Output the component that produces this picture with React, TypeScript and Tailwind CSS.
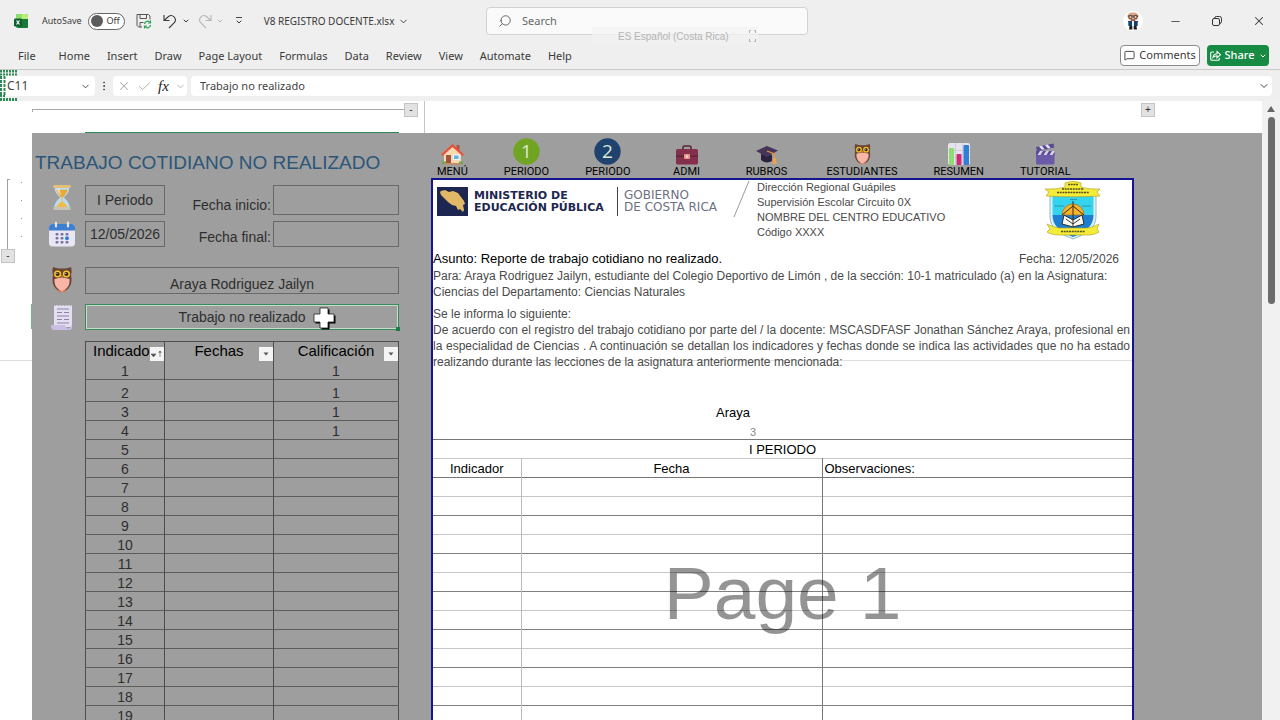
import { useState } from 'react'
import type { ReactNode } from 'react'
import {
  Check,
  ChevronDown,
  EllipsisVertical,
  MessageSquare,
  Minus,
  Search,
  X,
} from 'lucide-react'

const TABS = [
  'File', 'Home', 'Insert', 'Draw', 'Page Layout', 'Formulas',
  'Data', 'Review', 'View', 'Automate', 'Help',
]

const CALIFICACIONES: Record<number, string> = { 1: '1', 2: '1', 3: '1', 4: '1' }

const INDICADORES = Array.from({ length: 19 }, (_, i) => i + 1)

function ExcelLogo() {
  return (
    <svg width="14" height="14" viewBox="0 0 14 14">
      <rect x="2" y="0" width="12" height="14" rx="1.5" fill="#2fa84f" />
      <path d="M2 1.5A1.5 1.5 0 0 1 3.500 0H8v5H2z" fill="#8fe06a" />
      <path d="M8 0h4.500A1.500 1.500 0 0 1 14 1.500V5H8z" fill="#b9ee7c" />
      <path d="M7 5h7v7.500a1.500 1.500 0 0 1-1.500 1.500H4V9z" fill="#187a3a" />
      <rect x="0" y="4.500" width="8" height="8" rx="1.200" fill="#0f5f2c" />
      <path d="M2.500 6.500l3 4M5.500 6.500l-3 4" stroke="#fff" strokeWidth="1.200" />
    </svg>
  )
}

function SaveSync() {
  return (
    <svg width="16" height="16" viewBox="0 0 16 16" fill="none" stroke="#555" strokeWidth="1">
      <path d="M6 14H2.500L1 12.500V1.500h11.500L14 3v3.500" />
      <path d="M4 1.500v4h6.500v-4M4 14V9.500h3.500" />
      <path d="M8.500 11a3 3 0 0 1 5.500-1.500M14.500 12a3 3 0 0 1-5.500 1.500" stroke="#2ba457" strokeWidth="1.300" />
      <path d="M14.500 7.500v2.500H12M8.500 15.500V13H11" stroke="#2ba457" strokeWidth="1.200" />
    </svg>
  )
}

function UndoArrow({ className }: { className?: string }) {
  return (
    <svg width="14" height="15" viewBox="0 0 14 15" fill="none" stroke="currentColor" strokeWidth="1.1" className={className}>
      <path d="M1 1v5.500h5.500" />
      <path d="M1 6.500L5.500 2.500a4.300 4.300 0 0 1 6 6L6 14" />
    </svg>
  )
}

function ShareIcon() {
  return (
    <svg width="11" height="11" viewBox="0 0 11 11" fill="none" stroke="currentColor" strokeWidth="1.1">
      <path d="M4 2H2A1.300 1.300 0 0 0 .7 3.300v5.500A1.300 1.300 0 0 0 2 10.200h6a1.300 1.300 0 0 0 1.300-1.300V8" />
      <path d="M3 7.500C3.300 4.800 5 3.700 7 3.700V1.500l3.500 3.200L7 7.800V5.800C5.300 5.800 4.200 6.200 3 7.500z" />
    </svg>
  )
}

function Avatar() {
  return (
    <svg width="20" height="20" viewBox="0 0 20 20">
      <circle cx="10" cy="10" r="10" fill="#fff" />
      <rect x="5" y="1.500" width="10" height="8" rx="3.500" fill="#d9a78a" />
      <path d="M4.500 5h11" stroke="#4a3328" strokeWidth=".9" />
      <circle cx="7.500" cy="6" r="1.600" fill="#e8c4ae" stroke="#3a2a22" strokeWidth=".8" />
      <circle cx="12.500" cy="6" r="1.600" fill="#e8c4ae" stroke="#3a2a22" strokeWidth=".8" />
      <path d="M7.800 8.300h4.400v1.700H7.800z" fill="#9a5b43" />
      <path d="M5 10h10v5H5z" fill="#1d3c66" />
      <path d="M9 10h2v5H9z" fill="#e8f1fa" />
      <path d="M5.500 11v4M14.500 11v4" stroke="#3d86c9" strokeWidth="1" />
      <path d="M6.500 15h2.800v3.500H6zM10.700 15h2.800l.5 3.500h-3.300z" fill="#1b1b1f" />
    </svg>
  )
}

function Hourglass() {
  return (
    <svg width="20" height="25" viewBox="0 0 20 26">
      <path d="M2.500 3h15c0 5-3 7-5.500 10 2.500 3 6 5 6 11H2c0-6 3.500-8 6-11-2.500-3-5.500-5-5.500-10z" fill="#b9dcf2" />
      <path d="M4 5h12c-1 4-3.500 6-5 8H9C7.500 11 5 9 4 5z" fill="#eaa934" />
      <path d="M9.500 12h1v5l5 4.500v1.500h-11v-1.500l5-4.500z" fill="#f0bb4b" />
      <rect x="1" y="0" width="18" height="3" rx="1" fill="#e5c07a" />
      <rect x="1" y="23" width="18" height="3" rx="1" fill="#c9c3b4" />
      <path d="M4.500 4h3c.5 3 1 5 2 7-3-2-4.500-4-5-7z" fill="#fff" opacity=".5" />
    </svg>
  )
}

function Calendar() {
  return (
    <svg width="26" height="26" viewBox="0 0 26 26">
      <rect x="0" y="3" width="26" height="22.500" rx="3.500" fill="#e9e6f4" />
      <path d="M0 9.500V6.500A3.500 3.500 0 0 1 3.500 3h19A3.500 3.500 0 0 1 26 6.500v3z" fill="#3f7fd0" />
      <path d="M7 1.500v4M19 1.500v4" stroke="#dfe4f2" strokeWidth="2.200" strokeLinecap="round" />
      <g fill="#77719a">
        <rect x="6.500" y="12" width="3" height="2.500" rx="1" />
        <rect x="11.500" y="12" width="3" height="2.500" rx="1" />
        <rect x="16.500" y="12" width="3" height="2.500" rx="1" />
        <rect x="6.500" y="16" width="3" height="2.500" rx="1" />
        <rect x="11.500" y="16" width="3" height="2.500" rx="1" />
        <rect x="6.500" y="20" width="3" height="2.500" rx="1" />
        <rect x="11.500" y="20" width="3" height="2.500" rx="1" />
        <rect x="16.500" y="20" width="3" height="2.500" rx="1" />
      </g>
      <circle cx="18" cy="17.200" r="2" fill="#2f7fe0" />
    </svg>
  )
}

function Owl({ width, height }: { width: number; height: number }) {
  return (
    <svg width={width} height={height} viewBox="0 0 20 26">
      <path d="M1 0c3 1 5 1.500 9 1.500S16 1 19 0c.8 3 .8 5 0 8 1.500 7 0 12-5 15.500H6C1 20-.5 15 1 8 .2 5 .2 3 1 0z" fill="#6b4433" />
      <path d="M2.500 12c3-.5 5.500-1.500 7.500-1.500s4.500 1 7.500 1.500c.5 6-2 10-7.500 12.500C4.500 22 2 18 2.500 12z" fill="#f7b6a8" />
      <path d="M6 23l1.500 2.500L10 24l2.500 1.500L14 23l-4 1z" fill="#ef6d3a" />
      <circle cx="5.600" cy="7" r="3.600" fill="#f4c52e" />
      <circle cx="14.400" cy="7" r="3.600" fill="#f4c52e" />
      <circle cx="5.600" cy="7" r="2" fill="#3a2418" />
      <circle cx="14.400" cy="7" r="2" fill="#3a2418" />
      <circle cx="5" cy="6.500" r=".6" fill="#fff" />
      <circle cx="13.800" cy="6.500" r=".6" fill="#fff" />
      <path d="M9 8.500h2l-1 2.500z" fill="#ef9a2a" />
    </svg>
  )
}

function Scroll() {
  return (
    <svg width="22" height="26" viewBox="0 0 22 26">
      <path d="M3 1l1.500 1L6 1l1.500 1L9 1l1.500 1L12 1l1.500 1L15 1l1.500 1L18 1l1.500 1L21 1v22H3z" fill="#e4dff0" />
      <path d="M6 5h12M6 8.500h5M13 8.500h5M6 12h12M6 15.500h5M13 15.500h5M6 19h12" stroke="#8b82a8" strokeWidth="1.200" />
      <path d="M0 21h14.500c-.2 2 .6 3 2 3.500 2 .4 3.500-1 3.500-3h1v2c0 1.800-1.300 2.500-3 2.500H3c-2 0-3-2-3-5z" fill="#cabfe2" />
    </svg>
  )
}

function House() {
  return (
    <svg width="23" height="22" viewBox="0 0 23 22">
      <path d="M15.500 2h3v6h-3z" fill="#b5543c" />
      <path d="M3 10.500L11.500 3 20 10.500V20H3z" fill="#f6d9b0" />
      <path d="M0 11.500L11.500 1 23 11.500l-1.500 1.500-10-9-10 9z" fill="#e8503c" />
      <rect x="5" y="12" width="5" height="8" fill="#a0563c" />
      <rect x="12.500" y="12" width="5.500" height="4.500" fill="#5fb4e8" stroke="#fff" strokeWidth=".8" />
      <path d="M1 18.500h4V21H1zM18 18.500h4V21h-4z" fill="#5fae4a" />
      <path d="M3 20h17v1.500H3z" fill="#c98a5a" />
    </svg>
  )
}

function NumberBadge({ n, fill }: { n: number; fill: string }) {
  return (
    <svg width="27" height="27" viewBox="0 0 27 27">
      <circle cx="13.500" cy="13.500" r="13.200" fill={fill} />
      <text x="13.500" y="20" textAnchor="middle" fontFamily="'Open Sans', sans-serif" fontSize="19" fill="#dfe8d4">
        {n}
      </text>
    </svg>
  )
}

function Briefcase() {
  return (
    <svg width="22" height="20" viewBox="0 0 22 20">
      <path d="M7 5V2.500A1.500 1.500 0 0 1 8.500 1h5A1.500 1.500 0 0 1 15 2.500V5" fill="none" stroke="#5d2438" strokeWidth="1.600" />
      <rect x="0" y="4" width="22" height="15.500" rx="1.500" fill="#84304d" />
      <path d="M0 10.500h22v1.500H0z" fill="#5d2438" />
      <rect x="8" y="9" width="6" height="5" rx="1" fill="#e8938c" />
      <rect x="10" y="10.500" width="2" height="2" fill="#fbe4d0" />
    </svg>
  )
}

function GradCap() {
  return (
    <svg width="22" height="20" viewBox="0 0 22 20">
      <path d="M5 9v6c3 3 8 3 11 1v-6z" fill="#2c2340" />
      <path d="M0 6l11-5 11 4.500L11 12z" fill="#453659" />
      <path d="M11 6l7.500 3v5" fill="none" stroke="#e9943a" strokeWidth="1.300" />
      <path d="M17.300 13h2.600l.8 6h-4.200z" fill="#eea34a" />
    </svg>
  )
}

function BarChart() {
  return (
    <svg width="22" height="22" viewBox="0 0 22 22">
      <rect x="0" y="0" width="22" height="22" rx="2" fill="#e6e2ee" />
      <path d="M0 7.500h22M0 14.500h22M7.500 0v22M14.500 0v22" stroke="#cbc5da" strokeWidth=".8" />
      <rect x="1" y="5" width="5" height="17" rx=".8" fill="#8fdc72" />
      <rect x="8.500" y="11" width="5" height="11" rx=".8" fill="#cf2c73" />
      <rect x="15.500" y="2" width="5.500" height="20" rx=".8" fill="#2f7fd6" />
    </svg>
  )
}

function Clapper() {
  return (
    <svg width="21" height="22" viewBox="0 0 21 22">
      <path d="M1 4L18.500.5l.8 4L2 8.500z" fill="#5a4c92" />
      <path d="M4 3.400l3 3.400 2.700-.6-3-3.400zM10 2.200l3 3.400 2.700-.6-3-3.400z" fill="#e8e3f4" />
      <rect x="1" y="8" width="18.500" height="13.500" rx="1.500" fill="#6a5aa8" />
      <path d="M1 8h18.500v4H1z" fill="#5a4c92" />
      <path d="M5 8h3l-2.500 4h-3zM11 8h3l-2.500 4h-3zM17 8h2.500v1l-2 3h-3z" fill="#d8d2ec" />
    </svg>
  )
}

function CrestLogo() {
  return (
    <svg width="58" height="60" viewBox="0 0 58 60">
      <path d="M6 12c8 1 15-1 23-5 8 4 15 6 23 5v24c0 11-10 17-23 22C16 53 6 47 6 36z" fill="#d9f3fb" stroke="#7fa8b8" strokeWidth=".8" />
      <path d="M8.500 15h41v19h-41z" fill="#35d4ee" />
      <path d="M8.500 34h41c0 11-8 17-20.500 22C16.500 51 8.500 45 8.500 34z" fill="#1d7fd4" />
      <path d="M18 34a11 11 0 0 1 22 0z" fill="#f5b52a" stroke="#a5671a" strokeWidth=".7" />
      <path d="M29 20v22M18 34l11-9 11 9" stroke="#3c2a18" strokeWidth="1" fill="none" />
      <path d="M20 34l9 5 9-5 2 9-11 3-11-3z" fill="#f8f8f4" stroke="#2a2a2a" strokeWidth="1" />
      <path d="M22 38l7 5 7-5M29 39v7" stroke="#222" strokeWidth=".9" fill="none" />
      <path d="M21 2c5-2 11-2 16 0v4c6 2 12 2 19 2l-3 3 3 4c-18 1-36 1-54 0l3-4-4-3c8 0 14 0 20-2z" fill="#f5ec3a" stroke="#a89a20" strokeWidth=".6" />
      <path d="M24 3.500h10M18 8h22M13 11.500h32" stroke="#56501a" strokeWidth="1.300" strokeDasharray="2 .7" />
      <path d="M26 18.500h7M11 25h9M38 25h9" stroke="#2c7f92" strokeWidth="1" strokeDasharray="1.500 .6" />
      <path d="M3 43c7 3 10 4 14 4h24c5 0 8-1 14-4l-2 5 2 3c-5 3-9 3-14 3H17c-5 0-9 0-14-3l3-3z" fill="#f5ec3a" stroke="#a89a20" strokeWidth=".6" />
      <path d="M17 50.500h24" stroke="#56501a" strokeWidth="1.300" strokeDasharray="2 .7" />
    </svg>
  )
}

function MinistryLogo() {
  return (
    <svg width="314" height="38" viewBox="0 0 314 38" role="img" aria-label="Ministerio de Educación Pública">
      <rect x="0" y="7" width="31" height="29" fill="#1d2650" />
      <path
        d="M4 11l4-1 4 2 4-1 5 2 3 4 3 4 1 3-2 1 1 5-1 2-3-3-2 1-2-4-4-1-4-3-3-3-2-2-2-2-1-3z"
        fill="#e0b866"
      />
      <g fontFamily="'DejaVu Sans', sans-serif">
        <text x="37" y="19" fontSize="11" fontWeight="700" fill="#1d2650">MINISTERIO DE</text>
        <text x="37" y="31" fontSize="11" fontWeight="700" fill="#1d2650">EDUCACIÓN PÚBLICA</text>
        <text x="187" y="19" fontSize="12" fill="#6d7083">GOBIERNO</text>
        <text x="187" y="31" fontSize="12" fill="#6d7083">DE COSTA RICA</text>
      </g>
      <path d="M180.500 7v29" stroke="#3a4066" strokeWidth="1" />
      <path d="M312 1L297 37" stroke="#9a9a9a" strokeWidth="1" />
    </svg>
  )
}

// Marching-ants border of the copied range, seen past the left edge
function CopyMarquee() {
  return (
    <svg width="18" height="32" viewBox="0 0 18 32" className="pointer-events-none absolute top-0 left-0">
      <g stroke="#2c8a55" fill="none">
        <path d="M0 1h17M0 29.500h17" strokeWidth="3" strokeDasharray="2 1" />
        <path d="M0 4.500h17M0 26h6" strokeWidth="2" strokeDasharray="2 1" />
        <path d="M1 6v20" strokeWidth="2" strokeDasharray="3 1" />
        <path d="M4.500 6v20" strokeWidth="2" strokeDasharray="3 1" />
      </g>
    </svg>
  )
}

function TitleBar() {
  const [autoSave, setAutoSave] = useState(false)
  return (
    <header className="flex h-[42px] shrink-0 items-center">
      <div className="flex w-[486px] shrink-0 items-center pl-[14px]">
        <ExcelLogo />
        <span id="autosave" className="ml-[14px] text-[9px]">AutoSave</span>
        <button
          role="switch"
          aria-checked={autoSave}
          aria-labelledby="autosave"
          onClick={() => setAutoSave((v) => !v)}
          className="ml-[6px] flex h-[17px] w-[37px] items-center justify-between rounded-full border border-[#666] bg-white px-[2px] text-[9px]"
        >
          <span className="h-3 w-3 rounded-full bg-[#5c5c5c]" />
          <span className="pr-[2px]">{autoSave ? 'On' : 'Off'}</span>
        </button>
        <button aria-label="Save" className="ml-[11px]"><SaveSync /></button>
        <button aria-label="Undo" className="ml-[11px]"><UndoArrow /></button>
        <ChevronDown size={8} strokeWidth={3} className="ml-[5px]" />
        <button aria-label="Redo" className="ml-[8px] text-[#b5b5b5]"><UndoArrow className="-scale-x-100" /></button>
        <ChevronDown size={8} strokeWidth={3} className="ml-[4px] text-[#b5b5b5]" />
        <button aria-label="Customize toolbar" className="ml-[11px] flex flex-col items-center">
          <span className="h-px w-[6px] bg-[#444]" />
          <ChevronDown size={8} strokeWidth={3} />
        </button>
        <button className="ml-[21px] flex items-center gap-[4px] whitespace-nowrap text-[10px]">
          V8 REGISTRO DOCENTE.xlsx
          <ChevronDown size={11} strokeWidth={2} />
        </button>
      </div>
      <label className="flex h-7 w-[322px] shrink-0 items-center gap-[10px] rounded border border-[#d2d2d2] bg-[#fafafa] pl-[11px]">
        <Search size={14} strokeWidth={1.5} className="shrink-0 -scale-x-100 text-[#555]" />
        <input placeholder="Search" aria-label="Search" className="w-full bg-transparent text-[11px] outline-none placeholder:text-[#666]" />
      </label>
      <div className="ml-auto flex items-center">
        <Avatar />
        <div className="ml-[11px] flex items-center">
          <button aria-label="Minimize" className="flex w-[42px] justify-center"><Minus size={13} strokeWidth={1.5} /></button>
          <button aria-label="Restore" className="flex w-[42px] justify-center">
            <svg width="10" height="10" viewBox="0 0 10 10" fill="none" stroke="#333">
              <rect x=".5" y="2.500" width="7" height="7" rx="1.500" />
              <path d="M2.500 2.500A2 2 0 0 1 4.500.5H7.500a2 2 0 0 1 2 2v3a2 2 0 0 1-2 2" />
            </svg>
          </button>
          <button aria-label="Close" className="flex w-[42px] justify-center"><X size={14} strokeWidth={1.8} /></button>
        </div>
      </div>
    </header>
  )
}

function RibbonTabs() {
  return (
    <nav className="flex h-7 shrink-0 items-center border-b border-[#c9c9c9] pr-[11px] pl-[18px]">
      <div className="flex gap-[17px] pt-px text-[11px] whitespace-nowrap">
        {TABS.map((tab, i) => (
          <button key={tab} className={i === 0 ? 'mr-[6px]' : ''}>{tab}</button>
        ))}
      </div>
      <div className="ml-auto flex gap-[7px] text-[11px]">
        <button className="flex h-[21px] w-[80px] items-center justify-center gap-1 rounded border border-[#8a8a8a] bg-white">
          <MessageSquare size={11} strokeWidth={2} />
          Comments
        </button>
        <button className="flex h-[21px] w-[62px] items-center justify-center gap-1 rounded bg-[#178a43] font-medium text-white">
          <ShareIcon />
          Share
          <ChevronDown size={8} strokeWidth={3} />
        </button>
      </div>
    </nav>
  )
}

function FormulaBar() {
  return (
    <div className="relative flex h-[31px] shrink-0 items-center pt-px pr-2 text-[#444]">
      <div className="flex h-5 w-[95px] items-center justify-between rounded bg-white pr-1 pl-[7px] text-[12px]">
        <input aria-label="Name box" defaultValue="C11" className="w-14 outline-none" />
        <ChevronDown size={11} strokeWidth={2} />
      </div>
      <EllipsisVertical size={12} className="mx-[3px]" />
      <div className="flex h-5 w-[74px] items-center justify-between rounded bg-white pr-px pl-1 text-[#b0b0b0]">
        <X size={14} strokeWidth={1.8} />
        <Check size={15} strokeWidth={1.6} />
        <button aria-label="Insert function" className="font-['Liberation_Serif',serif] text-[15px] text-[#222] italic">fx</button>
        <ChevronDown size={11} strokeWidth={2} />
      </div>
      <div className="ml-1 flex h-5 flex-1 items-center rounded bg-white pr-[2px] pl-[9px]">
        <input aria-label="Formula" defaultValue="Trabajo no realizado" className="flex-1 text-[11px] outline-none" />
        <ChevronDown size={12} strokeWidth={2} />
      </div>
      <CopyMarquee />
    </div>
  )
}

function OutlineButton({ children }: { children: string }) {
  return (
    <button className="flex h-[14px] w-[14px] shrink-0 items-center justify-center border border-[#c4c4c4] bg-[#e2e2e2] text-[10px] leading-none text-[#333]">
      {children}
    </button>
  )
}

function ColumnOutline() {
  return (
    <div className="flex h-8 shrink-0 pl-8">
      <div className="flex w-[393px] shrink-0 flex-col justify-between border-r border-[#c4c4c4] pt-[2px]">
        <div className="flex items-center pr-[6px]">
          <div className="h-[3px] flex-1 border-t border-l border-[#a8a8a8]" />
          <OutlineButton>-</OutlineButton>
        </div>
        <div className="ml-[53px] h-px w-[314px] bg-[#2c8a55]" />
      </div>
      <div className="flex flex-1 justify-end pt-[2px] pr-[107px]">
        <OutlineButton>+</OutlineButton>
      </div>
    </div>
  )
}

function RowOutline() {
  return (
    <div className="flex w-8 shrink-0 flex-col pt-[46px]">
      <div className="flex h-[70px] pl-[7px]">
        <div className="w-[3px] border-t border-l border-[#a0a0a0]" />
        <div className="ml-[11px] flex flex-col gap-[17px] pt-[3px]">
          {[0, 1, 2, 3].map((i) => <span key={i} className="h-px w-px bg-[#999]" />)}
        </div>
      </div>
      <div className="pl-px"><OutlineButton>-</OutlineButton></div>
      <div className="mt-[41px] ml-auto h-[25px] w-px bg-[#6fb58a]" />
      <div className="mt-[31px] h-px bg-[#dedede]" />
    </div>
  )
}

function FormRow({ icon, className, children }: { icon: ReactNode; className: string; children: ReactNode }) {
  return (
    <div className={`flex ${className}`}>
      <div className="flex w-[53px] shrink-0 items-start justify-center pl-[7px]">{icon}</div>
      {children}
    </div>
  )
}

function FilterButton({ label, sorted }: { label: string; sorted?: boolean }) {
  return (
    <button aria-label={label} className="absolute right-0 bottom-0 flex h-[14px] w-[14px] items-center justify-center bg-[#f4f4f4]">
      <svg width="12" height="8" viewBox="0 0 12 8">
        {sorted ? (
          <path d="M0 4h5L2.500 7zM9 7V1M7.500 2.500L9 1l1.500 1.500" fill="#555" stroke="#555" strokeWidth=".6" />
        ) : (
          <path d="M3.500 2.500h5L6 5.500z" fill="#555" />
        )}
      </svg>
    </button>
  )
}

function LeftPanel() {
  const field = 'border border-[#686868] bg-transparent text-center outline-none'
  return (
    <section className="w-[399px] shrink-0 pt-[16px] text-[14px] text-[#2e2e2e]">
      <h1 className="pl-[3px] text-[19px] leading-7 text-[#2b5679]">TRABAJO COTIDIANO NO REALIZADO</h1>

      <FormRow icon={<Hourglass />} className="mt-[8px] h-[30px]">
        <input aria-label="Periodo" defaultValue="I Periodo" className={`${field} w-[80px]`} />
        <label htmlFor="inicio" className="w-[108px] self-end pr-[2px] text-right leading-[19px]">Fecha inicio:</label>
        <input id="inicio" className={`${field} w-[126px]`} />
      </FormRow>
      <FormRow icon={<Calendar />} className="mt-[6px] h-[26px]">
        <input aria-label="Fecha" defaultValue="12/05/2026" className={`${field} w-[80px]`} />
        <label htmlFor="final" className="w-[108px] self-end pr-[2px] text-right leading-[19px]">Fecha final:</label>
        <input id="final" className={`${field} w-[126px]`} />
      </FormRow>
      <FormRow icon={<Owl width={20} height={26} />} className="mt-[20px] h-[27px]">
        <input aria-label="Estudiante" defaultValue="Araya Rodriguez Jailyn" className={`${field} w-[314px] pt-2`} />
      </FormRow>
      <FormRow icon={<Scroll />} className="mt-[10px] h-[26px]">
        <div className="relative w-[314px] border border-[#3b8a5b] bg-[#9e9e9e]">
          <input
            aria-label="Tipo de reporte"
            defaultValue="Trabajo no realizado"
            className="h-full w-full border border-[#c3dccb] bg-transparent text-center outline-none"
          />
          <span className="absolute -right-[2px] -bottom-[2px] h-[4px] w-[4px] bg-[#1f7a45]" />
          {/* cell cursor */}
          <svg width="24" height="24" viewBox="0 0 24 24" className="absolute top-px left-[226px]">
            <path d="M9.500 3.500h8v6h6v8h-6v6h-8v-6h-6v-8h6z" fill="#000" />
            <path d="M8 2h8v6h6v8h-6v6H8v-6H2V8h6z" fill="#fff" stroke="#222" strokeWidth=".8" />
          </svg>
        </div>
      </FormRow>

      <table className="mt-[11px] ml-[53px] w-[313px] table-fixed border-collapse border border-[#4d4d4d] text-center leading-4">
        <colgroup>
          <col className="w-[79px]" />
          <col className="w-[109px]" />
          <col className="w-[125px]" />
        </colgroup>
        <thead className="text-[15px] text-black">
          <tr className="h-[19px]">
            <th className="relative overflow-hidden border-r border-[#4d4d4d] p-0 pl-[7px] text-left font-normal">
              Indicador
              <FilterButton label="Filtrar Indicador" sorted />
            </th>
            <th className="relative border-r border-[#4d4d4d] p-0 font-normal">
              Fechas
              <FilterButton label="Filtrar Fechas" />
            </th>
            <th className="relative p-0 font-normal">
              Calificación
              <FilterButton label="Filtrar Calificación" />
            </th>
          </tr>
        </thead>
        <tbody>
          {INDICADORES.map((n) => (
            <tr key={n} className={`border-b border-[#5c5c5c] align-bottom ${n === 2 ? 'h-[22px]' : 'h-[19px]'}`}>
              <td className="border-r border-[#4d4d4d] p-0">{n}</td>
              <td className="border-r border-[#4d4d4d] p-0" />
              <td className="p-0">{CALIFICACIONES[n]}</td>
            </tr>
          ))}
        </tbody>
      </table>
    </section>
  )
}

const NAV: { label: string; icon: ReactNode; width?: string }[] = [
  { label: 'MENÚ', icon: <House /> },
  { label: 'PERIODO', icon: <NumberBadge n={1} fill="#6fa522" /> },
  { label: 'PERIODO', icon: <NumberBadge n={2} fill="#20426f" /> },
  { label: 'ADMI', icon: <Briefcase />, width: 'w-10' },
  { label: 'RUBROS', icon: <GradCap />, width: 'w-12' },
  { label: 'ESTUDIANTES', icon: <Owl width={17} height={21} /> },
  { label: 'RESUMEN', icon: <BarChart /> },
  { label: 'TUTORIAL', icon: <Clapper /> },
]

function SheetNav() {
  return (
    <nav className="flex h-[45px] shrink-0 items-end gap-9 pl-[6px]">
      {NAV.map((item, i) => (
        <a
          key={i}
          href="#"
          className={`flex flex-col items-center gap-px font-[Roboto,sans-serif] text-[11px] leading-3 text-black ${item.width ?? ''}`}
        >
          {item.icon}
          {item.label}
        </a>
      ))}
    </nav>
  )
}

function ReportPage() {
  return (
    <article className="relative mr-[128px] flex-1 overflow-hidden border-2 border-b-0 border-[#14148c] bg-white text-[12px] leading-4 text-[#4a4a4a]">
      {/* seam between the two window regions */}
      <div className="pointer-events-none absolute inset-x-0 top-[180px] h-px bg-[#dedede]" />

      <div className="flex h-[71px] items-start pl-1">
        <MinistryLogo />
        <address className="ml-[6px] text-[11px] leading-[15px] not-italic">
          Dirección Regional Guápiles<br />
          Supervisión Escolar Circuito 0X<br />
          NOMBRE DEL CENTRO EDUCATIVO<br />
          Código XXXX
        </address>
        <div className="mt-px mr-[30px] ml-auto"><CrestLogo /></div>
      </div>

      <div className="flex justify-between pr-[13px]">
        <h2 className="text-[13px] text-black">Asunto: Reporte de trabajo cotidiano no realizado.</h2>
        <span>Fecha: 12/05/2026</span>
      </div>
      <p className="mt-px">
        Para: Araya Rodriguez Jailyn, estudiante del Colegio Deportivo de Limón , de la sección: 10-1 matriculado (a) en la Asignatura:<br />
        Ciencias del Departamento: Ciencias Naturales
      </p>
      <p className="mt-[6px]">Se le informa lo siguiente:</p>
      <p className="relative pr-[2px] text-justify">
        De acuerdo con el registro del trabajo cotidiano por parte del / la docente: MSCASDFASF Jonathan Sánchez Araya, profesional en
        la especialidad de Ciencias . A continuación se detallan los indicadores y fechas donde se indica las actividades que no ha estado
        realizando durante las lecciones de la asignatura anteriormente mencionada:
      </p>

      <div className="mt-[35px] h-[34px] pl-[283px] text-[13px] text-black">
        Araya
        <div className="mt-[3px] w-[40px] overflow-hidden text-right text-[11px] text-[#888]">3</div>
      </div>

      <table className="w-full table-fixed border-collapse text-[13px] text-black">
        <colgroup>
          <col className="w-[88px]" />
          <col className="w-[301px]" />
          <col />
        </colgroup>
        <thead className="align-bottom">
          <tr className="h-[19px] border-t border-b border-t-[#777] border-b-[#c6c6c6]">
            <th colSpan={3} className="p-0 font-normal">I PERIODO</th>
          </tr>
          <tr className="h-[19px] border-b border-[#777]">
            <th className="border-r border-[#bbb] p-0 font-normal">Indicador</th>
            <th className="border-r border-[#777] p-0 font-normal">Fecha</th>
            <th className="p-0 pl-[2px] text-left font-normal">Observaciones:</th>
          </tr>
        </thead>
        <tbody>
          {INDICADORES.map((n) => (
            <tr key={n} className="h-[19px] border-b odd:border-[#c6c6c6] even:border-[#808080]">
              <td className="border-r border-[#bbb] p-0" />
              <td className="border-r border-[#777] p-0" />
              <td className="p-0" />
            </tr>
          ))}
        </tbody>
      </table>

      {/* page break preview watermark */}
      <div className="pointer-events-none absolute inset-x-0 top-[371px] text-center text-[75px] leading-[84px] text-black/42">
        Page 1
      </div>
    </article>
  )
}

function ScrollBar() {
  return (
    <div className="flex w-[18px] shrink-0 flex-col items-center bg-[#f1f1f1] pt-[5px]">
      <svg width="8" height="6" viewBox="0 0 8 6"><path d="M4 0l4 6H0z" fill="#666" /></svg>
      <div className="mt-[5px] h-[187px] w-[7px] rounded-full bg-[#6c6c6c]" />
    </div>
  )
}

export default function App() {
  return (
    <div className="relative flex h-screen flex-col overflow-hidden bg-[#efefef] font-['Noto_Sans','Open_Sans',sans-serif] text-[#3a3a3a]">
      <TitleBar />
      <RibbonTabs />
      <FormulaBar />

      <main className="flex min-h-0 flex-1 font-['Liberation_Sans',Arial,sans-serif]">
        <div className="flex min-w-0 flex-1 flex-col bg-white">
          <ColumnOutline />
          <div className="flex min-h-0 flex-1">
            <RowOutline />
            <div className="flex min-w-0 flex-1 overflow-hidden bg-[#9e9e9e]">
              <LeftPanel />
              <div className="flex min-w-0 flex-1 flex-col">
                <SheetNav />
                <ReportPage />
              </div>
            </div>
          </div>
        </div>
        <ScrollBar />
      </main>

      {/* input language hint fading out */}
      <div className="pointer-events-none absolute top-[27px] left-[592px] flex h-[18px] w-[166px] items-center justify-between bg-[#f2f2f2]/70 pr-[2px] pl-[26px] font-['Liberation_Sans',sans-serif] text-[10px] text-[#b4b4b4]">
        ES Español (Costa Rica)
        <svg width="7" height="12" viewBox="0 0 7 12" fill="none" stroke="#b0b0b0">
          <path d="M.5 3V.5H2M5 .5h1.500V3M.5 9v2.500H2M5 11.500h1.500V9" />
        </svg>
      </div>
    </div>
  )
}
